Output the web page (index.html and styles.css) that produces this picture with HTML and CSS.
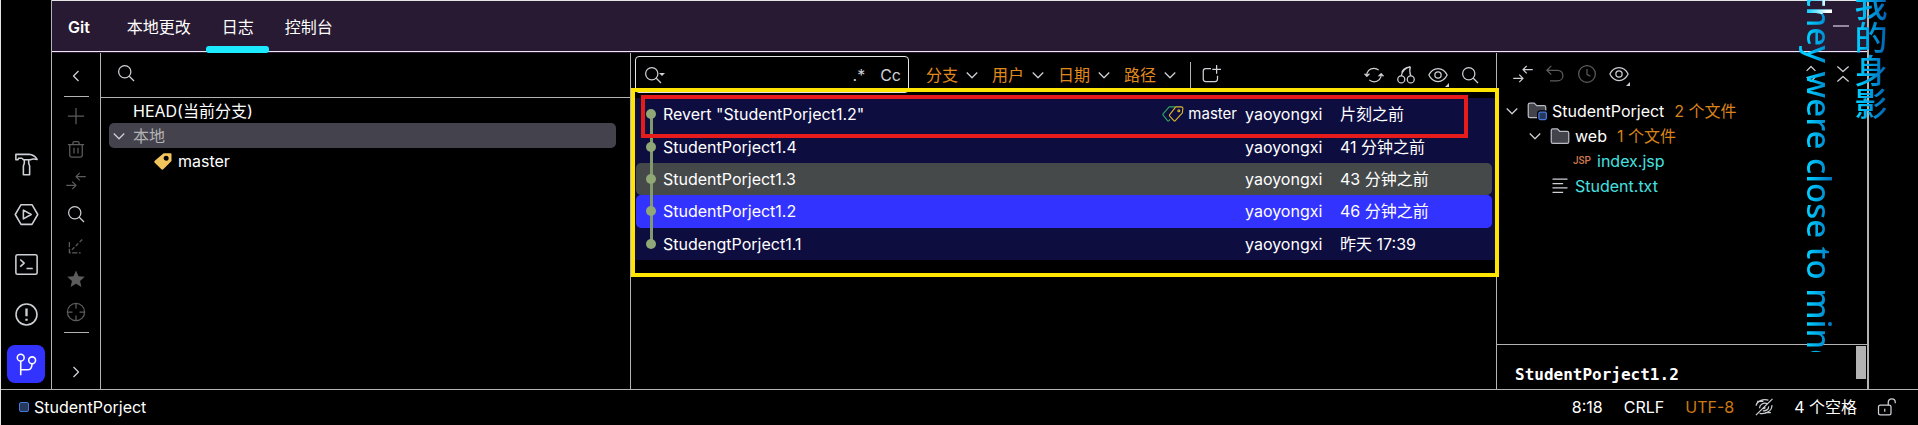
FILE: index.html
```html
<!DOCTYPE html>
<html lang="zh-CN">
<head>
    <meta charset="UTF-8">
    <meta name="viewport" content="width=device-width, initial-scale=1.0">
    <title>StudentPorject - Git</title>
    <link rel="stylesheet" href="styles.css">
</head>
<body>

<!-- 图标 -->
<svg class="sprite" aria-hidden="true">
    <symbol id="i-search" viewBox="0 0 16 16"><circle cx="7" cy="7" r="4.9"/><path d="M10.6 10.6 14.4 14.4"/></symbol>
    <symbol id="i-left" viewBox="0 0 16 16"><path d="M10 4 6 8l4 4"/></symbol>
    <symbol id="i-right" viewBox="0 0 16 16"><path d="m6 4 4 4-4 4"/></symbol>
    <symbol id="i-down" viewBox="0 0 16 16"><path d="m3.8 6 4.2 4.2L12.2 6"/></symbol>
    <symbol id="i-plus" viewBox="0 0 16 16"><path d="M8 1.5v13M1.5 8h13"/></symbol>
    <symbol id="i-trash" viewBox="0 0 16 16"><path d="M1.500 4.500h13M5.500 4.500V3.300c0-.7.5-1.200 1.200-1.200h2.600c.7 0 1.200.5 1.200 1.200v1.200M3 4.500v8.200c0 1 .7 1.700 1.700 1.700h6.600c1 0 1.700-.7 1.700-1.700V4.500M6.400 7v4.500M9.600 7v4.500"/></symbol>
    <symbol id="i-compare" viewBox="0 0 16 16"><path d="M15.8 4.5H8M11 1.5l-3 3 3 3M.2 11.5H8M5 8.5l3 3-3 3"/></symbol>
    <symbol id="i-checkout" viewBox="0 0 16 16"><path d="M13 2 3.5 11.5" stroke-dasharray="3 1.4"/><path d="M2.7 4v8.6h9" stroke-dasharray="4.2 1.2"/></symbol>
    <symbol id="i-star" viewBox="0 0 16 16"><path class="solid" d="m8 1.2 2 4.6 5 .4-3.8 3.3 1.2 4.9L8 11.8l-4.4 2.600 1.200-4.900L1 6.200l5-.4z"/></symbol>
    <symbol id="i-target" viewBox="0 0 16 16"><circle cx="8" cy="8" r="6.9"/><path d="M8 1.200v4M8 10.800v4M1.200 8h4M10.800 8h4"/></symbol>
    <symbol id="i-refresh" viewBox="0 0 16 16"><path d="M2.200 8.800C2 5 4.600 2.600 8 2.600c1.500 0 2.800.6 3.800 1.500M13.800 7.200C14 11 11.400 13.400 8 13.400c-1.500 0-2.800-.6-3.800-1.500M.4 7l1.900 2 2.100-2M11.600 9l2.100-2 1.900 2"/></symbol>
    <symbol id="i-cherry" viewBox="0 0 16 16"><circle cx="4.200" cy="11.500" r="2.800"/><circle cx="11.800" cy="11.500" r="2.800"/><path d="M4.200 8.700C5 5 7.500 2.200 11.500 1.500M11.500 1.500C10.600 4 10.900 6 11.800 8.700M4.800 6.600C4.400 4.300 7 2 11.500 1.500"/></symbol>
    <symbol id="i-eye" viewBox="0 0 16 16"><path d="M.7 8C2.300 4.600 5 2.800 8 2.800s5.700 1.800 7.300 5.200c-1.600 3.400-4.300 5.200-7.300 5.200S2.300 11.400.7 8z"/><circle cx="8" cy="8" r="2.500"/></symbol>
    <symbol id="i-newtab" viewBox="0 0 16 16"><path d="M8 2.800H3.800c-1.300 0-2 .7-2 2v6.400c0 1.300.7 2 2 2h7.400c1.300 0 2-.7 2-2V8.500M12.500 0v7M9 3.500h7"/></symbol>
    <symbol id="i-undo" viewBox="0 0 16 16"><path d="M5 1.500 1.500 5 5 8.500M1.500 5H10c2.500 0 4.300 1.900 4.300 4.300S12.500 13.500 10 13.500H4"/></symbol>
    <symbol id="i-clock" viewBox="0 0 16 16"><circle cx="8" cy="8" r="6.700"/><path d="M8 4v4.300l2.700 1.500"/></symbol>
    <symbol id="i-expand" viewBox="0 0 16 16"><path d="m4.500 5.500 3.500-3.500 3.500 3.500M4.500 10.500 8 14l3.500-3.500"/></symbol>
    <symbol id="i-collapse" viewBox="0 0 16 16"><path d="M3.500 2 8 6l4.500-4M3.500 14 8 10l4.500 4"/></symbol>
    <symbol id="i-hammer" viewBox="0 0 16 16"><path d="M1.200 1.500h8.300c2.600.2 4.200 1.400 5.300 3.300-1.600-.4-3-.5-4.300.2H6.200L5 4H3L2.400 5H1.200zM6.600 5v2.200L6 9v5.500h4V9l-.6-1.800V5"/></symbol>
    <symbol id="i-run" viewBox="0 0 16 16"><path d="M4.500 1.700h7L15.200 8l-3.700 6.300h-7L.8 8z"/><path d="M6 5.200v5.600L11 8z"/></symbol>
    <symbol id="i-terminal" viewBox="0 0 16 16"><rect x="1.200" y="1.800" width="13.600" height="12.400" rx="1"/><path d="m4 4.800 2.500 2.300L4 9.400M8 10.500h4"/></symbol>
    <symbol id="i-problem" viewBox="0 0 16 16"><circle cx="8" cy="8" r="6.700"/><path d="M8 4.200v4.900M8 10.700v1.300" stroke-width="1.500"/></symbol>
    <symbol id="i-git" viewBox="0 0 16 16"><circle cx="4.300" cy="3.600" r="2.200"/><circle cx="11.600" cy="5.300" r="2.200"/><path d="M4.300 5.800v9M4.300 11.300h4.800c1.500 0 2.300-1.200 2.500-3.800"/></symbol>
    <symbol id="i-tag" viewBox="0 0 16 16"><path class="solid" fill-rule="evenodd" d="M8.500 1.700h5.300c.7 0 1 .3 1 1V8l-6.600 6.600c-.6.500-1 .5-1.500 0L1.400 9.300c-.5-.5-.5-1 0-1.500zm2 2.100a2 2 0 1 0 .01 4 2 2 0 0 0 0-4z"/></symbol>
    <symbol id="i-tags" viewBox="0 0 20 16"><path stroke="#2fa860" d="M12 1.500H6.500L1 7.800c-.4.500-.4.800 0 1.200L5 14c.4.500.9.500 1.300 0l1-1"/><path stroke="#dcb830" d="M12.500 1.500h5c1 0 1.500.4 1.500 1.300L18.500 7l-6.400 7c-.4.500-.9.500-1.300 0L7 10c-.4-.5-.4-.9 0-1.400z"/><circle stroke="#dcb830" cx="15.300" cy="5" r=".9"/></symbol>
    <symbol id="i-folder" viewBox="0 0 16 16"><path fill="#43434b" stroke="#b9bac4" d="M1 3.500c0-.8.5-1.300 1.300-1.300h3.500l2 2h5.900c.8 0 1.300.5 1.300 1.300v7c0 .8-.5 1.300-1.300 1.300H2.300c-.8 0-1.300-.5-1.300-1.300z"/></symbol>
    <symbol id="i-module" viewBox="0 0 16 16"><path fill="#43434b" stroke="#b9bac4" d="M1 3c0-.8.5-1.300 1.300-1.300h3.500l2 2h5.900c.8 0 1.300.5 1.300 1.300v7c0 .8-.5 1.300-1.300 1.300H2.300c-.8 0-1.300-.5-1.300-1.300z"/><rect fill="#25385e" stroke="#000" stroke-width="3" x="9.500" y="8.800" width="6" height="6" rx="1.200"/><rect fill="#25385e" stroke="#4878dc" x="9.500" y="8.800" width="6" height="6" rx="1.200"/></symbol>
    <symbol id="i-text" viewBox="0 0 16 16"><path d="M2 2.500h12M2 6h8.500M2 9.500h12M2 13h8.500"/></symbol>
    <symbol id="i-noai" viewBox="0 0 16 16"><path d="M11.500 2.500C7 1.200 2.200 3.400 1.700 7M14.300 6.500c.3 4.500-4.700 7.600-9.800 6.600M10.500 5.300C7.500 4.300 4.500 6 4.400 9M11.700 7.500c.2 2.500-2.200 3.800-4.700 3.500M7 9c.8.500 1.800 0 2-.8M2.500 3.500h5M9 12.500h4.500M1.500 14.500 14.800 1.500"/></symbol>
    <symbol id="i-lock" viewBox="0 0 16 16"><rect x="1.200" y="6.500" width="10" height="7.800" rx="1.500"/><path d="M9 6.500V4.200c0-1.700 1.200-2.700 2.800-2.700s2.800 1 2.800 2.700v.8M6.200 9.300v2.400"/></symbol>
</svg>

<div class="workspace">
    <nav class="stripe">
        <button title="构建"><svg><use href="#i-hammer"/></svg></button>
        <button title="运行"><svg><use href="#i-run"/></svg></button>
        <button title="终端"><svg><use href="#i-terminal"/></svg></button>
        <button title="问题"><svg><use href="#i-problem"/></svg></button>
        <button class="active" title="Git"><svg><use href="#i-git"/></svg></button>
    </nav>

    <section class="tool-window">
        <header class="window-header">
            <h1>Git</h1>
            <button class="tab">本地更改</button>
            <button class="tab selected">日志</button>
            <button class="tab">控制台</button>
            <button class="minimize" title="隐藏"></button>
        </header>

        <div class="panes">
            <div class="side-actions">
                <button title="收起"><svg class="icon"><use href="#i-left"/></svg></button>
                <hr>
                <div class="group">
                    <button class="off" title="新建分支"><svg class="icon"><use href="#i-plus"/></svg></button>
                    <button class="off" title="删除"><svg class="icon"><use href="#i-trash"/></svg></button>
                    <button class="off" title="比较"><svg class="icon"><use href="#i-compare"/></svg></button>
                    <button title="搜索"><svg class="icon"><use href="#i-search"/></svg></button>
                    <button class="off" title="签出"><svg class="icon"><use href="#i-checkout"/></svg></button>
                    <button class="off" title="收藏"><svg class="icon"><use href="#i-star"/></svg></button>
                    <button class="off" title="定位"><svg class="icon"><use href="#i-target"/></svg></button>
                </div>
                <hr>
                <button class="last" title="更多"><svg class="icon"><use href="#i-right"/></svg></button>
            </div>

            <div class="branches">
                <label class="branch-search">
                    <svg class="icon"><use href="#i-search"/></svg>
                    <input type="text" aria-label="搜索分支">
                </label>
                <ul class="tree">
                    <li class="head">HEAD(当前分支)</li>
                    <li class="local"><svg class="icon"><use href="#i-down"/></svg>本地</li>
                    <li class="branch"><svg class="icon tag"><use href="#i-tag"/></svg>master</li>
                </ul>
            </div>

            <div class="log">
                <div class="log-toolbar">
                    <div class="log-search">
                        <svg class="icon"><use href="#i-search"/></svg>
                        <i class="caret"></i>
                        <input type="text" aria-label="搜索提交">
                        <button title="正则表达式">.*</button>
                        <button title="区分大小写">Cc</button>
                    </div>
                    <div class="filters">
                        <button>分支<svg class="icon"><use href="#i-down"/></svg></button>
                        <button>用户<svg class="icon"><use href="#i-down"/></svg></button>
                        <button>日期<svg class="icon"><use href="#i-down"/></svg></button>
                        <button>路径<svg class="icon"><use href="#i-down"/></svg></button>
                    </div>
                    <button class="new-tab" title="新建标签页"><svg class="icon"><use href="#i-newtab"/></svg></button>
                    <div class="log-actions">
                        <button title="刷新"><svg class="icon"><use href="#i-refresh"/></svg></button>
                        <button title="优选"><svg class="icon"><use href="#i-cherry"/></svg></button>
                        <button class="more" title="视图选项"><svg class="icon"><use href="#i-eye"/></svg></button>
                        <button title="转到"><svg class="icon"><use href="#i-search"/></svg></button>
                    </div>
                </div>

                <div class="commits">
                    <table>
                        <tr>
                            <td class="graph"></td>
                            <td><div class="subject">Revert "StudentPorject1.2"<span class="ref"><svg><use href="#i-tags"/></svg>master</span></div></td>
                            <td class="author">yaoyongxi</td>
                            <td class="date">片刻之前</td>
                        </tr>
                        <tr>
                            <td class="graph"></td>
                            <td>StudentPorject1.4</td>
                            <td class="author">yaoyongxi</td>
                            <td class="date">41 分钟之前</td>
                        </tr>
                        <tr class="hover">
                            <td class="graph"></td>
                            <td>StudentPorject1.3</td>
                            <td class="author">yaoyongxi</td>
                            <td class="date">43 分钟之前</td>
                        </tr>
                        <tr class="selected">
                            <td class="graph"></td>
                            <td>StudentPorject1.2</td>
                            <td class="author">yaoyongxi</td>
                            <td class="date">46 分钟之前</td>
                        </tr>
                        <tr>
                            <td class="graph"></td>
                            <td>StudengtPorject1.1</td>
                            <td class="author">yaoyongxi</td>
                            <td class="date">昨天 17:39</td>
                        </tr>
                    </table>
                </div>

                <!-- 标注框 -->
                <div class="mark mark-list"></div>
                <div class="mark mark-commit"></div>
            </div>

            <div class="details">
                <div class="details-toolbar">
                    <button title="比较"><svg class="icon"><use href="#i-compare"/></svg></button>
                    <button class="off" title="还原"><svg class="icon"><use href="#i-undo"/></svg></button>
                    <button class="off" title="历史"><svg class="icon"><use href="#i-clock"/></svg></button>
                    <button class="more" title="视图选项"><svg class="icon"><use href="#i-eye"/></svg></button>
                    <button class="expand" title="全部展开"><svg class="icon"><use href="#i-expand"/></svg></button>
                    <button title="全部折叠"><svg class="icon"><use href="#i-collapse"/></svg></button>
                </div>
                <ul class="tree files">
                    <li class="level-0"><svg class="icon"><use href="#i-down"/></svg><svg class="icon"><use href="#i-module"/></svg>StudentPorject<span class="count">2 个文件</span></li>
                    <li class="level-1"><svg class="icon"><use href="#i-down"/></svg><svg class="icon"><use href="#i-folder"/></svg>web<span class="count">1 个文件</span></li>
                    <li class="level-3 added"><span class="jsp">JSP</span>index.jsp</li>
                    <li class="level-2 added"><svg class="icon"><use href="#i-text"/></svg>Student.txt</li>
                </ul>
                <div class="message">
                    <p>StudentPorject1.2</p>
                    <div class="thumb"></div>
                </div>
            </div>
        </div>
    </section>
</div>

<footer class="status">
    <span class="project"><i></i>StudentPorject</span>
    <span class="position">8:18</span>
    <span class="eol">CRLF</span>
    <span class="encoding">UTF-8</span>
    <svg class="icon"><use href="#i-noai"/></svg>
    <span class="indent">4 个空格</span>
    <svg class="icon"><use href="#i-lock"/></svg>
</footer>

<!-- 桌面歌词 -->
<div class="lyrics">
    <p class="en">they were close to mind</p>
    <p class="zh">我的身影</p>
</div>

</body>
</html>
```
FILE: styles.css
```css
* {
    box-sizing: border-box;
}

body {
    margin: 0;
    height: 100vh;
    display: flex;
    flex-direction: column;
    position: relative;
    overflow: hidden;
    background-color: #000;
    border-left: 1px solid #e4e4e4;
    color: #fff;
    font-family: Inter, "Noto Sans CJK SC", sans-serif;
    font-size: 16px;
    line-height: 24px;
}

button {
    padding: 0;
    border: none;
    background: none;
    color: inherit;
    font: inherit;
    display: flex;
    align-items: center;
    justify-content: center;
    cursor: pointer;
}

input {
    min-width: 0;
    padding: 0;
    border: none;
    outline: none;
    background: none;
    color: inherit;
    font: inherit;
}

ul {
    margin: 0;
    padding: 0;
    list-style: none;
}

svg {
    flex: none;
    fill: none;
    stroke: #ced0d6;
    stroke-width: 1;
    stroke-linejoin: round;
}

.sprite {
    position: absolute;
    width: 0;
    height: 0;
}

.solid {
    fill: currentColor;
    stroke: none;
}

.icon {
    width: 20px;
    height: 20px;
}

.off svg {
    color: #5c5c5c;
    stroke: #5c5c5c;
}

.workspace {
    flex: 1;
    min-height: 0;
    display: flex;
    padding-right: 49px;
}

/* 左侧工具条 */
.stripe {
    width: 51px;
    padding-bottom: 6px;
    border-right: 1px solid #b3b3b3;
    display: flex;
    flex-direction: column;
    justify-content: flex-end;
    align-items: center;
    gap: 12px;
}

.stripe button {
    width: 38px;
    height: 38px;
    border-radius: 8px;
}

.stripe svg {
    width: 25px;
    height: 25px;
}

.stripe .active {
    background-color: #3333ff;
}

.stripe .active svg {
    stroke: #fff;
}

.tool-window {
    flex: 1;
    min-width: 0;
    display: flex;
    flex-direction: column;
    border-top: 1px solid #e4e4e4;
    border-right: 2px solid #b3b3b3;
}

.window-header {
    height: 51px;
    flex: none;
    display: flex;
    padding: 0 18px 0 16px;
    background-color: #281a32;
    border-bottom: 1px solid #f0e6f5;
}

.window-header h1 {
    margin: 0 21px 0 0;
    font-size: 16px;
    font-weight: 600;
    line-height: 52px;
}

.tab {
    position: relative;
    padding: 2px 15px 0 16px;
}

.tab.selected::after {
    content: "";
    position: absolute;
    left: 0;
    right: 0;
    bottom: -2px;
    height: 7px;
    border-radius: 3px;
    background-color: #1ceaff;
}

.minimize {
    margin-left: auto;
}

.minimize::before {
    content: "";
    width: 16px;
    height: 2px;
    background-color: #94899c;
}

.panes {
    flex: 1;
    min-height: 0;
    display: flex;
    border-top: 1px solid #281a32;
}

.side-actions {
    width: 49px;
    padding: 13px 0 7px;
    border-right: 1px solid #b3b3b3;
    display: flex;
    flex-direction: column;
    align-items: center;
}

.side-actions hr {
    width: 25px;
    margin: 10px 0 0;
    border: none;
    border-top: 1px solid #b3b3b3;
}

.side-actions .group {
    height: 228px;
    margin: 3px 0 -6px;
    display: flex;
    flex-direction: column;
}

.group button {
    flex: 1;
}

.side-actions .last {
    margin-top: auto;
}

.branches {
    width: 530px;
    border-right: 1px solid #b3b3b3;
}

.branch-search {
    height: 45px;
    display: flex;
    align-items: center;
    gap: 8px;
    padding: 0 15px 4px;
    border-bottom: 1px solid #b3b3b3;
}

.branch-search input {
    flex: 1;
}

.tree li {
    height: 25px;
    display: flex;
    align-items: center;
    gap: 5px;
    white-space: nowrap;
}

.branches .tree {
    padding: 0 14px 0 8px;
}

.tree .head {
    padding-left: 24px;
}

.tree .local {
    gap: 4px;
    border-radius: 5px;
    background-color: #43424d;
    color: #b3b3b3;
}

.tree .branch {
    padding-left: 44px;
}

.tag {
    color: #f2c55c;
}

/* 提交日志 */
.log {
    flex: 1;
    min-width: 0;
    position: relative;
    border-right: 1px solid #b3b3b3;
}

.log-toolbar {
    height: 45px;
    display: flex;
    align-items: center;
    padding: 3px 16px 5px 4px;
}

.log-search {
    width: 274px;
    height: 37px;
    display: flex;
    align-items: center;
    padding: 0 7px;
    border: 1px solid #e4e4e4;
    border-radius: 4px;
    color: #ced0d6;
}

.log-search input {
    flex: 1;
}

.log-search button {
    margin-left: 15px;
}

.caret {
    border: 3px solid transparent;
    border-top-color: #ced0d6;
    border-bottom: none;
    margin-left: -4px;
}

.filters {
    display: flex;
    gap: 10px;
    margin-left: 17px;
    color: #e08a1e;
}

.filters button {
    gap: 4px;
}

.new-tab {
    height: 26px;
    margin-left: 10px;
    padding-left: 10px;
    border-left: 1px solid #b3b3b3;
}

.log-actions {
    display: flex;
    gap: 12px;
    margin-left: auto;
}

.more {
    position: relative;
}

.more::after {
    content: "";
    position: absolute;
    right: -1px;
    bottom: -2px;
    border: 2px solid transparent;
    border-right-color: #ced0d6;
    border-bottom-color: #ced0d6;
}

.commits {
    margin-left: 4px;
    padding: 0 4px 0 1px;
    background-color: #0d0d40;
}

.commits table {
    width: 100%;
    height: 162px;
    border-spacing: 0;
}

.commits td {
    padding: 0;
    white-space: nowrap;
}

.commits td:first-child {
    border-radius: 5px 0 0 5px;
}

.commits td:last-child {
    border-radius: 0 5px 5px 0;
}

.hover td {
    background-color: #45494a;
}

.commits .selected td {
    background-color: #3333ff;
}

.graph {
    width: 27px;
    position: relative;
}

.graph::before {
    content: "";
    position: absolute;
    left: 14px;
    top: 0;
    bottom: 0;
    width: 3px;
    background-color: #82996d;
}

tr:first-child .graph::before {
    top: 50%;
}

tr:last-child .graph::before {
    bottom: 50%;
}

.graph::after {
    content: "";
    position: absolute;
    left: 10px;
    top: calc(50% - 5px);
    width: 10px;
    height: 10px;
    border-radius: 50%;
    background-color: #8fa876;
}

.subject {
    display: flex;
    justify-content: space-between;
}

.ref {
    display: flex;
    align-items: center;
    gap: 4px;
    padding-right: 8px;
    font-size: 15px;
}

.ref svg {
    width: 22px;
    height: 18px;
}

.author {
    width: 95px;
}

.date {
    width: 152px;
}

.mark {
    position: absolute;
    pointer-events: none;
}

.mark-list {
    left: 0;
    right: -3px;
    top: 35px;
    height: 189px;
    border: 4px solid #ffe500;
}

.mark-commit {
    left: 10px;
    right: 28px;
    top: 42px;
    height: 43px;
    border: 4px solid #e61c1c;
}

/* 提交详情 */
.details {
    width: 370px;
    display: flex;
    flex-direction: column;
}

.details-toolbar {
    height: 45px;
    display: flex;
    align-items: center;
    gap: 12px;
    padding: 0 14px 3px 16px;
}

.expand {
    margin-left: auto;
}

.files {
    flex: 1;
}

.level-0 {
    padding-left: 5px;
}

.level-1 {
    padding-left: 28px;
}

.level-2 {
    padding-left: 53px;
}

.level-3 {
    padding-left: 75px;
}

.count {
    margin-left: 5px;
    color: #d9831a;
}

.added {
    color: #47e0e0;
}

.jsp {
    width: 20px;
    color: #d07a4e;
    font-family: Roboto, sans-serif;
    font-size: 10px;
    font-weight: 500;
    text-align: center;
}

.message {
    height: 45px;
    display: flex;
    justify-content: space-between;
    padding: 0 1px 0 18px;
    border-top: 1px solid #b3b3b3;
}

.message p {
    margin: 18px 0 0;
    font-family: "DejaVu Sans Mono", monospace;
    font-weight: 700;
}

.thumb {
    width: 10px;
    height: 33px;
    margin-top: 1px;
    background-color: #b3b3b3;
}

.status {
    height: 36px;
    flex: none;
    display: flex;
    align-items: center;
    padding: 0 21px 2px 18px;
    border-top: 1px solid #b3b3b3;
}

.project {
    display: flex;
    align-items: center;
    gap: 5px;
    margin-right: auto;
}

.project i {
    width: 10px;
    height: 10px;
    border: 1px solid #4878dc;
    border-radius: 2px;
    background-color: #25385e;
}

.eol,
.encoding {
    margin-left: 21px;
}

.encoding {
    color: #cc7a0e;
}

.encoding + .icon,
.indent,
.indent + .icon {
    margin-left: 20px;
}

/* 歌词悬浮在窗口之上 */
.lyrics {
    position: absolute;
    top: 0;
    right: 28px;
    height: 352px;
    display: flex;
    gap: 8px;
    overflow: hidden;
    pointer-events: none;
}

.lyrics p {
    margin: 0;
    writing-mode: vertical-rl;
    white-space: nowrap;
    font-family: "Noto Sans", "Noto Sans CJK SC", sans-serif;
    font-size: 33px;
    font-weight: 500;
    line-height: 42px;
    color: transparent;
    background-image: linear-gradient(to right, #00ccff 25%, #0064b4 90%);
    -webkit-background-clip: text;
    background-clip: text;
}

.lyrics .en {
    margin-top: -6px;
    background-image: linear-gradient(to right, #00ccff 20%, #fff 70%), linear-gradient(to right, #00ccff 25%, #0064b4 90%);
    background-size: 100% 20px, 100% 100%;
    background-repeat: no-repeat;
}

.lyrics .zh {
    margin-top: -12px;
}
```
